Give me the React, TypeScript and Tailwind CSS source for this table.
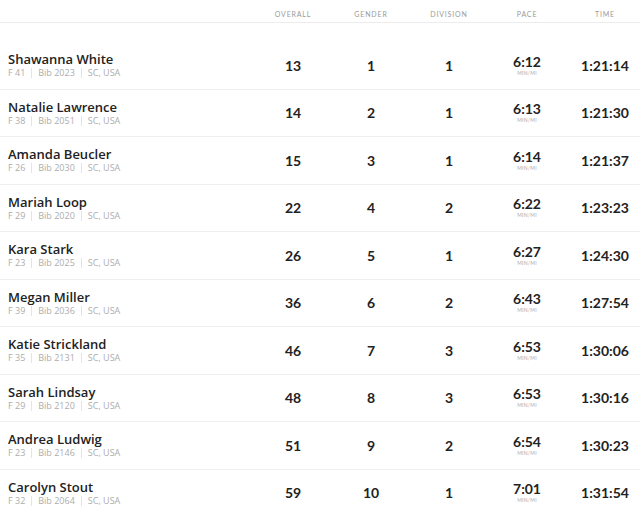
const results = [
  { name: "Shawanna White", age: "F 41", bib: "2023", overall: 13, gender: 1, division: 1, pace: "6:12", time: "1:21:14" },
  { name: "Natalie Lawrence", age: "F 38", bib: "2051", overall: 14, gender: 2, division: 1, pace: "6:13", time: "1:21:30" },
  { name: "Amanda Beucler", age: "F 26", bib: "2030", overall: 15, gender: 3, division: 1, pace: "6:14", time: "1:21:37" },
  { name: "Mariah Loop", age: "F 29", bib: "2020", overall: 22, gender: 4, division: 2, pace: "6:22", time: "1:23:23" },
  { name: "Kara Stark", age: "F 23", bib: "2025", overall: 26, gender: 5, division: 1, pace: "6:27", time: "1:24:30" },
  { name: "Megan Miller", age: "F 39", bib: "2036", overall: 36, gender: 6, division: 2, pace: "6:43", time: "1:27:54" },
  { name: "Katie Strickland", age: "F 35", bib: "2131", overall: 46, gender: 7, division: 3, pace: "6:53", time: "1:30:06" },
  { name: "Sarah Lindsay", age: "F 29", bib: "2120", overall: 48, gender: 8, division: 3, pace: "6:53", time: "1:30:16" },
  { name: "Andrea Ludwig", age: "F 23", bib: "2146", overall: 51, gender: 9, division: 2, pace: "6:54", time: "1:30:23" },
  { name: "Carolyn Stout", age: "F 32", bib: "2064", overall: 59, gender: 10, division: 1, pace: "7:01", time: "1:31:54" },
]

const headers = ["Overall", "Gender", "Division", "Pace", "Time"]

function Sep() {
  return <span className="mx-[6px] inline-block h-[10px] w-px bg-[#e4e4e4]" />
}

export default function App() {
  return (
    <div className="w-[640px] h-[512px] overflow-hidden bg-white">
      <div className="w-[644px]">
        {/* Header */}
        <div className="flex h-[23px] border-b border-[#ececec] font-['Lato',sans-serif]">
          <div className="flex-1" />
          {headers.map((h) => (
            <div key={h} className="w-[78px] pt-[9px] text-center text-[7px] uppercase tracking-[0.12em] text-[#9a9a9a]">
              {h}
            </div>
          ))}
        </div>
        <div className="h-[19px]" />

        {/* Rows */}
        {results.map((r) => (
          <div key={r.name} className="flex h-[47.5px] items-center border-b border-[#efefef]">
            <div className="flex-1 pl-2">
              <div className="font-['Open_Sans',sans-serif] text-[13px] font-semibold leading-[16px] text-[#222]">{r.name}</div>
              <div className="flex items-center font-['Open_Sans',sans-serif] text-[9px] leading-[12px] text-[#adadad]">
                <span>{r.age}</span>
                <Sep />
                <span>Bib {r.bib}</span>
                <Sep />
                <span>SC, USA</span>
              </div>
            </div>
            <div className="w-[78px] text-center font-['Lato',sans-serif] text-[14px] font-bold text-[#222]">{r.overall}</div>
            <div className="w-[78px] text-center font-['Lato',sans-serif] text-[14px] font-bold text-[#222]">{r.gender}</div>
            <div className="w-[78px] text-center font-['Lato',sans-serif] text-[14px] font-bold text-[#222]">{r.division}</div>
            <div className="flex w-[78px] flex-col items-center font-['Lato',sans-serif]">
              <span className="text-[14px] font-bold leading-[16px] text-[#222]">{r.pace}</span>
              <span className="text-[5px] uppercase leading-[7px] tracking-[0.05em] text-[#aaa]">min/mi</span>
            </div>
            <div className="w-[78px] text-center font-['Lato',sans-serif] text-[14px] font-bold text-[#222]">{r.time}</div>
          </div>
        ))}
      </div>
    </div>
  )
}
